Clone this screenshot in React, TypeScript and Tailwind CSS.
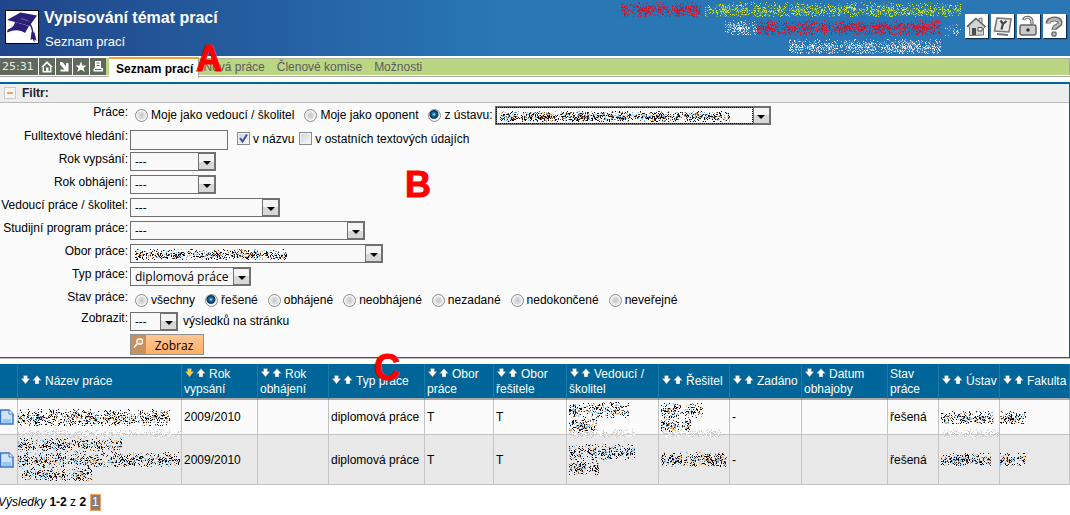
import type { ReactNode } from "react"

type NoiseProps = {
  w: number
  h: number
  colors: string[]
  seed: number
  density?: number
  className?: string
}

const INK = ["#000000", "#1a0a3a", "#2b1a10", "#000000", "#e8a860", "#6fb4e8", "#c8f4fa", "#7a4a20", "#8fb8d8"]
const PALE = ["#c8c8c8", "#d6d6d6", "#ffffff"]
const RED = ["#e00f22", "#c01a30", "#a03050", "#7a3a78"]
const LIME = ["#c8e020", "#a8c830", "#5fa050", "#2f9060", "#e0e040", "#6a98a0"]
const WHITE = ["#ffffff", "#d8ecff", "#9cc8f0", "#5fb0f0", "#c8a8c8"]

// scrambled text, one pixel per speck, grouped to word-like clumps
const Noise = ({ w, h, colors, seed, density = 0.45, className = "" }: NoiseProps) => {
  let s = seed * 7919 + 17
  const rand = () => {
    s = (s * 16807) % 2147483647
    return s / 2147483647
  }
  const paths = colors.map(() => "")
  for (let x = 0; x < w; x++) {
    const clump = 0.8 + 0.3 * Math.sin(x / 4 + seed) * Math.sin(x / 11)
    for (let y = 0; y < h; y++) {
      const edge = 1 - Math.abs((y + 0.5) / h - 0.55) * 1.6
      if (rand() < density * clump * edge * 1.5) {
        paths[Math.floor(rand() * colors.length)] += `M${x} ${y}h1v1h-1z`
      }
    }
  }
  return (
    <svg width={w} height={h} viewBox={`0 0 ${w} ${h}`} shapeRendering="crispEdges" aria-hidden="true" className={"block max-w-none shrink-0 " + className}>
      {paths.map((d, i) => <path key={i} d={d} fill={colors[i]} />)}
    </svg>
  )
}

const CapLogo = () => (
  <svg width="34" height="34" viewBox="0 0 34 34" className="shrink-0">
    <rect x="0.5" y="0.5" width="33" height="33" fill="#fff" stroke="#000" />
    <path d="M2 10L15.500 2.500L32 5.500L24.500 16L12 12.500Z" fill="#2b1f78" />
    <path d="M10 12L24 16L20 23C15 19.500 9 19.500 2.500 22.500C1.500 21 2.500 19.500 5 18.500C8 17 9.500 15 10 12Z" fill="#2b1f78" />
    <path d="M16 8.500L23.500 11" fill="none" stroke="#8f88b8" strokeWidth="0.700" />
    <path d="M23 12C26.500 15 27.500 19 28 24" fill="none" stroke="#2b1f78" strokeWidth="1.500" />
    <path d="M26.500 22L29.500 22.500L31.500 31L29.500 29.500L29.500 32.500L27.500 29L25.500 30Z" fill="#2b1f78" />
  </svg>
)

const topIcons: { label: string; icon: ReactNode }[] = [
  {
    label: "Domů",
    icon: (
      <>
        <path d="M2 12L11 4L14 7V4.500L17 4V10L20.500 12.500L18.500 14V21L4.500 21.500V13Z" fill="#d4d4d4" stroke="#777" />
        <path d="M2 13L11 4.500L20.500 13" fill="none" stroke="#666" strokeWidth="1.600" />
        <path d="M7 14H11V21H7Z" fill="#4c4c4c" />
        <path d="M13 13.500H17V17H13Z" fill="#f4f4f4" stroke="#555" />
      </>
    ),
  },
  {
    label: "Nastavení",
    icon: (
      <>
        <path d="M6 4L20 5L18 18L3.500 17Z" fill="#e8e8e8" stroke="#777" strokeWidth="1.600" />
        <path d="M6 20L17 21" stroke="#777" strokeWidth="2" />
        <path d="M9.500 6.500L12 10L15.500 7M12 9.500L10.500 15.500" fill="none" stroke="#444" strokeWidth="2.200" />
      </>
    ),
  },
  {
    label: "Odhlásit",
    icon: (
      <>
        <path d="M15 12V9C15.500 2.500 8 1.500 6.500 6" fill="none" stroke="#666" strokeWidth="3.200" />
        <path d="M15 12V9C15.500 3 8.500 2 7 5.500" fill="none" stroke="#ddd" strokeWidth="1.200" />
        <rect x="3" y="11" width="16" height="10" rx="2" fill="#ccc" stroke="#666" strokeWidth="1.500" />
        <circle cx="11" cy="16" r="1.800" fill="#333" />
      </>
    ),
  },
  {
    label: "Nápověda",
    icon: (
      <>
        <path d="M5 9.500C5 3.500 18 3.500 17 9C16.500 12.500 11 11.500 11 16" fill="none" stroke="#6c6c6c" strokeWidth="5" />
        <path d="M5.500 9C5.500 4 17.500 4 17 9C16.500 12 11 11.500 11 15.500" fill="none" stroke="#bbb" strokeWidth="2.400" />
        <circle cx="11" cy="20" r="2.200" fill="#bbb" stroke="#6c6c6c" strokeWidth="1.300" />
      </>
    ),
  },
]

const barIcons: { label: string; icon: ReactNode }[] = [
  { label: "Domů", icon: <path fillRule="evenodd" d="M8 3L14 9H12.500V14.500H3.500V9H2ZM8 5.500L5 8.500V13H7V9.500H9.500V13H11V8.500Z" /> },
  { label: "Přejít", icon: <path d="M4 4H6.500L10 8.500V5H12.500V13.500H4.500V11.500H8.500L4 6.500Z" /> },
  { label: "Oblíbené", icon: <path d="M8 3.500L9.500 7.500H13.500L10.500 10L11.800 14L8 11.500L4.200 14L5.500 10L2.500 7.500H6.500Z" /> },
  { label: "Tisk", icon: <path fillRule="evenodd" d="M5 3H11V10H13V13.500H3.500V11L5 9.500ZM6.500 4.500V5.500H9.500V4.500ZM6.500 7V8H9.500V7ZM5 11V12H11.500V11Z" /> },
]

const Sort = ({ active = false }: { active?: boolean }) => (
  <svg width="21" height="10" viewBox="0 0 21 10" className="mr-[3px] inline-block align-baseline" aria-hidden="true">
    <path d="M2.500 0.500H6.500V3.500H9L4.500 9L0 3.500H2.500Z" fill={active ? "#ffc94a" : "#fff"} stroke="#3f6f86" strokeWidth="0.400" />
    <path d="M14 9H18V5.500H20.500L16 0.500L11.500 5.500H14Z" fill="#fff" stroke="#3f6f86" strokeWidth="0.400" />
  </svg>
)

const DocIcon = () => (
  <svg width="14" height="16" viewBox="0 0 14 16" className="block" aria-hidden="true">
    <path d="M0.500 1H9L13 5V15H0.500Z" fill="#cfe4fb" stroke="#3c74c4" strokeWidth="1.500" />
    <path d="M9 1V5H13" fill="#fff" stroke="#3c74c4" />
    <path d="M2.500 11H11M2.500 13H11" stroke="#5fa8ec" />
  </svg>
)

type DropProps = { id: string; label?: string; value?: string; width: string; focused?: boolean; noise?: ReactNode }

const Drop = ({ id, label, value = "", width, focused, noise }: DropProps) => (
  <span className={"relative inline-flex h-[19px] shrink-0 " + width}>
    <select
      id={id}
      aria-label={label}
      className={"h-full w-full appearance-none border border-[#707070] bg-[#f9f9f9] pl-1 font-['Open_Sans',sans-serif] text-xs leading-[17px] outline-none" + (focused ? " border-2" : "")}
    >
      <option>{value}</option>
    </select>
    {focused && <span className="pointer-events-none absolute inset-y-px left-px right-[18px] border border-dotted border-black" />}
    {noise && <span className="pointer-events-none absolute left-[5px] top-[5px]">{noise}</span>}
    <span className="pointer-events-none absolute inset-y-0 right-0 flex w-[18px] items-center justify-center border-2 border-l border-[#707070] bg-gradient-to-b from-[#f4f4f4] from-50% to-[#d8d8d8] to-50%">
      <svg width="8" height="4" viewBox="0 0 8 4" className="mt-0.5" aria-hidden="true"><path d="M0 0H8L4 4Z" /></svg>
    </span>
  </span>
)

const Radio = ({ name, label, checked }: { name: string; label: string; checked?: boolean }) => (
  <label className="mr-2.5 flex items-center gap-[3px]">
    <input
      type="radio"
      name={name}
      defaultChecked={checked}
      className="size-[13px] appearance-none rounded-full border border-[#8a8a8a] bg-[radial-gradient(circle,#c4c7cb_0,#dadcdf_3px,#f6f6f6_5px)] checked:bg-[radial-gradient(circle_at_45%_40%,#8fe0f8_0,#1a6a9a_2px,#0c2f52_4px,#f4f4f4_5px)]"
    />
    {label}
  </label>
)

const Check = ({ label, checked }: { label: string; checked?: boolean }) => (
  <label className="flex items-center gap-[3px]">
    <span className="relative -mt-[3px] flex">
      <input type="checkbox" defaultChecked={checked} className="size-[13px] appearance-none border border-[#8a8a8a] bg-gradient-to-br from-[#cfd2d6] to-[#fafafa] shadow-[inset_0_0_0_1px_#f2f2f2]" />
      {checked && (
        <svg width="13" height="13" viewBox="0 0 13 13" className="pointer-events-none absolute inset-0" aria-hidden="true">
          <path d="M3 6L5.500 9.500L10 2.500" fill="none" stroke="#3f4f98" strokeWidth="2" />
        </svg>
      )}
    </span>
    {label}
  </label>
)

const Row = ({ label, id, children, height = "h-[23px]" }: { label: string; id?: string; children: ReactNode; height?: string }) => (
  <div className={"flex items-start whitespace-nowrap " + height}>
    <div className="flex w-32 shrink-0 justify-end leading-[14px]">
      {id ? <label htmlFor={id}>{label}</label> : <span>{label}</span>}
    </div>
    <div className="ml-0.5 flex items-center leading-[21px]">{children}</div>
  </div>
)

const columns = [
  { w: "w-[18px]", text: "", sort: false },
  { w: "w-[164px]", text: "Název práce", sort: true },
  { w: "w-[76px]", text: "Rok vypsání", sort: true, active: true },
  { w: "w-[71px]", text: "Rok obhájení", sort: true },
  { w: "w-[96px]", text: "Typ práce", sort: true },
  { w: "w-[69px]", text: "Obor práce", sort: true },
  { w: "w-[73px]", text: "Obor řešitele", sort: true },
  { w: "w-[92px]", text: "Vedoucí / školitel", sort: true },
  { w: "w-[71px]", text: "Řešitel", sort: true },
  { w: "w-[72px]", text: "Zadáno", sort: true },
  { w: "w-[86px]", text: "Datum obhajoby", sort: true },
  { w: "w-[51px]", text: "Stav práce", sort: false },
  { w: "w-[61px]", text: "Ústav", sort: true },
  { w: "w-[70px]", text: "Fakulta", sort: true },
]

const works = [
  {
    id: 1,
    row: "h-[35px] bg-[#fbfbfb]",
    title: <Noise w={152} h={17} colors={INK} seed={3} />,
    smudge: true,
    leader: [54, 28],
    solver: <><Noise w={42} h={15} colors={INK} seed={5} /><Noise w={30} h={14} colors={INK} seed={6} /></>,
    unit: 53,
  },
  {
    id: 2,
    row: "h-[50px] bg-[#e8e8e8]",
    title: <><Noise w={104} h={14} colors={INK} seed={7} /><Noise w={162} h={15} colors={INK} seed={8} /><Noise w={70} h={14} colors={INK} seed={9} className="ml-1" /></>,
    smudge: false,
    leader: [60, 30],
    solver: <Noise w={66} h={15} colors={INK} seed={11} density={0.55} />,
    unit: 50,
  },
]

const statuses = ["všechny", "řešené", "obhájené", "neobhájené", "nezadané", "nedokončené", "neveřejné"]

const cell = "relative border-b border-r border-[#c4c4c4] px-0.5"

const Marker = ({ letter, place }: { letter: string; place: string }) => (
  <span className={"pointer-events-none absolute z-10 text-4xl leading-9 font-bold text-[#ff0000] [-webkit-text-stroke:1px_#ff0000] " + place}>{letter}</span>
)

const App = () => {
  return (
    <div className="relative overflow-x-hidden bg-white font-['Liberation_Sans',Arial,sans-serif] text-xs text-black">
      <header className="flex h-14 items-start justify-between bg-gradient-to-r from-[#20458a] to-[#2977b5] to-[500px]">
        <div className="flex gap-[5px] pl-[5px] pt-2.5 text-white">
          <CapLogo />
          <div className="whitespace-nowrap">
            <h1 className="text-base leading-4 font-bold">Vypisování témat prací</h1>
            <p className="mt-2 pl-px text-[13px] leading-4">Seznam prací</p>
          </div>
        </div>
        <div className="flex gap-1 pr-1">
          <div className="flex flex-col items-end gap-[3px] pt-0.5">
            <div className="flex gap-1">
              <Noise w={80} h={15} colors={RED} seed={21} density={0.55} />
              <Noise w={256} h={15} colors={LIME} seed={22} density={0.55} />
            </div>
            <div className="flex">
              <Noise w={32} h={15} colors={WHITE} seed={23} />
              <Noise w={184} h={15} colors={RED} seed={24} density={0.55} />
              <Noise w={16} h={12} colors={WHITE} seed={25} density={0.2} className="ml-1 mt-1" />
            </div>
            <Noise w={152} h={15} colors={WHITE} seed={26} className="mr-5" />
          </div>
          <div className="flex gap-[3px] pt-3.5">
            {topIcons.map((t) =>
              <button key={t.label} type="button" aria-label={t.label} className="h-6 w-[23px] bg-white shadow-[1px_1px_1px_#0d2c4a]">
                <svg width="23" height="24" viewBox="0 0 23 24">{t.icon}</svg>
              </button>
            )}
          </div>
        </div>
      </header>

      <nav className="mt-0.5 flex h-[19px] border-b border-[#a8a8a8]">
        <div className="flex h-[17px] gap-px">
          <span className="flex w-[38px] items-center bg-[#5f6a5d] pl-0.5 pt-0.5 font-['DejaVu_Sans',sans-serif] text-[11px] text-[#e8e8e8]">25:31</span>
          {barIcons.map((b) =>
            <button key={b.label} type="button" aria-label={b.label} className="w-4 bg-[#5f6a5d]">
              <svg width="16" height="17" viewBox="0 0 16 17" fill="#fff">{b.icon}</svg>
            </button>
          )}
        </div>
        <div className="h-[17px] w-[3px] bg-[#bad683]" />
        <a href="#seznam" className="-mt-px -mb-0.5 flex items-center whitespace-nowrap border-r border-t-2 border-r-[#a8a8a8] border-t-[#f0a030] bg-white pl-[7px] pr-[5px] font-bold">Seznam prací</a>
        <div className="flex h-[17px] grow items-center gap-3 whitespace-nowrap border-r border-t border-r-[#a8a8a8] border-t-[#a9b494] bg-[#bad683] pl-1 text-[#5c5c5c]">
          <a href="#nova">Nová práce</a>
          <a href="#clenove">Členové komise</a>
          <a href="#moznosti">Možnosti</a>
        </div>
      </nav>

      <form className="mt-[5px] border-t-2 border-r border-b border-[#006699] bg-[#fbfbfb] shadow-[0_1px_0_#c4c4c4]" onSubmit={(e) => e.preventDefault()}>
        <div className="flex h-[19px] items-center gap-1.5 border-b border-[#bbbbbb] bg-[#ededed] pl-1">
          <button type="button" aria-label="Sbalit filtr" className="flex size-3 items-center justify-center border border-[#cccccc] bg-[#f6f6f6]">
            <span className="h-0.5 w-1.5 bg-[#f4a460]" />
          </button>
          <h2 className="font-bold text-[#222233]">Filtr:</h2>
        </div>

        <div className="pt-0.5">
          <Row label="Práce:" height="h-6">
            <div className="flex pl-[5px]">
              <Radio name="prace" label="Moje jako vedoucí / školitel" />
              <Radio name="prace" label="Moje jako oponent" />
              <Radio name="prace" label="z ústavu:" checked />
            </div>
            <span className="-ml-2 flex"><Drop id="ustav" label="Ústav" width="w-[276px]" focused noise={<Noise w={230} h={11} colors={INK} seed={31} density={0.65} />} /></span>
          </Row>
          <Row label="Fulltextové hledání:" id="fulltext">
            <input id="fulltext" type="text" className="mr-[9px] h-5 w-[98px] border border-[#707070] bg-[#f9f9f9] px-1 outline-none" />
            <div className="flex gap-[5px]">
              <Check label="v názvu" checked />
              <Check label="v ostatních textových údajích" />
            </div>
          </Row>
          <Row label="Rok vypsání:" id="vypsani"><Drop id="vypsani" value="---" width="w-[86px]" /></Row>
          <Row label="Rok obhájení:" id="obhajeni"><Drop id="obhajeni" value="---" width="w-[86px]" /></Row>
          <Row label="Vedoucí práce / školitel:" id="vedouci"><Drop id="vedouci" value="---" width="w-[150px]" /></Row>
          <Row label="Studijní program práce:" id="program"><Drop id="program" value="---" width="w-[235px]" /></Row>
          <Row label="Obor práce:" id="obor"><Drop id="obor" width="w-[253px]" noise={<Noise w={152} h={11} colors={INK} seed={32} density={0.55} />} /></Row>
          <Row label="Typ práce:" id="typ"><Drop id="typ" value="diplomová práce" width="w-[121px]" /></Row>
          <Row label="Stav práce:" height="h-[21px]">
            <div className="flex pl-[5px]">
              {statuses.map((st) => <Radio key={st} name="stav" label={st} checked={st === "řešené"} />)}
            </div>
          </Row>
          <Row label="Zobrazit:" id="pocet">
            <Drop id="pocet" value="---" width="w-12" />
            <span className="pl-[5px]">výsledků na stránku</span>
          </Row>
          <div className="pb-0.5 pl-[130px]">
            <button type="submit" className="flex h-[21px] w-[74px] border border-[#909090] bg-gradient-to-b from-[#ffc795] to-[#ffb066] font-['Open_Sans',sans-serif]">
              <span className="flex h-full w-[15px] justify-center bg-[#c8905c] pt-[3px]">
                <svg width="11" height="11" viewBox="0 0 11 11" aria-hidden="true">
                  <rect x="4" y="1" width="5.500" height="5" rx="1.500" fill="#d8a878" stroke="#fff" strokeWidth="1.300" />
                  <path d="M4 6L1 9.500" stroke="#fff" strokeWidth="1.500" />
                </svg>
              </span>
              <span className="grow pr-px text-center leading-[21px]">Zobraz</span>
            </button>
          </div>
        </div>
      </form>

      <table className="mt-1.5 w-full table-fixed border-separate border-spacing-0">
        <thead>
          <tr className="h-9 bg-[#006699] text-left leading-[15px] text-white">
            {columns.map((c, i) =>
              <th key={i} className={"border-r border-b-2 border-r-[#1a7aa8] border-b-[#a8a8a8] pt-px pl-0.5 font-normal " + c.w}>
                <span className={c.sort ? "pl-px" : ""}>
                  {c.sort && <Sort active={c.active} />}
                  {c.text}
                </span>
              </th>
            )}
          </tr>
        </thead>
        <tbody>
          {works.map((wk) =>
            <tr key={wk.id} className={wk.row}>
              <td className="border-b border-r border-[#c4c4c4]"><DocIcon /></td>
              <td className="relative border-b border-r border-[#c4c4c4]">
                {wk.title}
                {wk.smudge && <Noise w={164} h={9} colors={PALE} seed={41} className="absolute -bottom-1 left-0" />}
              </td>
              <td className={cell}>2009/2010</td>
              <td className={cell}></td>
              <td className={cell + " whitespace-nowrap"}>diplomová práce</td>
              <td className={cell}>T</td>
              <td className={cell}>T</td>
              <td className={cell}>
                <Noise w={wk.leader[0] + 6} h={16} colors={INK} seed={wk.id + 50} />
                <Noise w={wk.leader[1]} h={15} colors={INK} seed={wk.id + 60} density={0.55} />
                {wk.smudge && <Noise w={66} h={9} colors={PALE} seed={42} className="absolute -bottom-1 left-0.5" />}
              </td>
              <td className={cell}>
                {wk.solver}
                {wk.smudge && <Noise w={58} h={9} colors={PALE} seed={43} className="absolute -bottom-1 left-1" />}
              </td>
              <td className={cell}>-</td>
              <td className={cell}></td>
              <td className={cell}>řešená</td>
              <td className={cell}>
                <Noise w={wk.unit} h={13} colors={INK} seed={wk.id + 70} density={0.55} />
                {wk.smudge && <Noise w={56} h={9} colors={PALE} seed={44} className="absolute -bottom-1 left-1" />}
              </td>
              <td className="border-b border-r border-[#c4c4c4]">
                <Noise w={26} h={13} colors={INK} seed={wk.id + 80} density={0.55} />
              </td>
            </tr>
          )}
        </tbody>
      </table>

      <p className="-ml-0.5 mt-[9px] flex items-center gap-1 leading-[17px]">
        <span><i>Výsledky</i> <b>1-2</b> z <b>2</b></span>
        <a href="#strana-1" className="border border-[#f4a460] bg-[#808080] px-px leading-[15px] text-white">1</a>
      </p>

      <Marker letter="A" place="left-[196px] top-[41px]" />
      <Marker letter="B" place="left-[405px] top-[167px]" />
      <Marker letter="C" place="left-[374px] top-[350px]" />
    </div>
  )
}

export default App
